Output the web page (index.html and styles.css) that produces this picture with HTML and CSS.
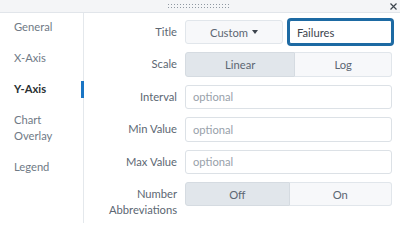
FILE: index.html
```html
<!DOCTYPE html>
<html>
<head>
<meta charset="utf-8">
<link rel="stylesheet" href="styles.css">
</head>
<body>
<div class="dialog">
  <div class="titlebar">
    <span></span>
    <div class="grip"></div>
    <button class="close" aria-label="Close">
      <svg width="7" height="7" viewBox="0 0 7 7"><path d="M0.5 0.5L6.5 6.5M6.5 0.5L0.5 6.5" stroke="#3c444d" stroke-width="1.2" fill="none"/></svg>
    </button>
  </div>
  <div class="body">
    <nav class="nav">
      <div class="nav-item">General</div>
      <div class="nav-item">X-Axis</div>
      <div class="nav-item active">Y-Axis</div>
      <div class="nav-item">Chart<br>Overlay</div>
      <div class="nav-item">Legend</div>
    </nav>
    <div class="form">
      <div class="label">Title</div>
      <div class="control split">
        <button class="btn">Custom <span class="caret"></span></button>
        <div class="input focus">Failures</div>
      </div>

      <div class="label">Scale</div>
      <div class="control group">
        <button class="seg selected">Linear</button>
        <button class="seg">Log</button>
      </div>

      <div class="label">Interval</div>
      <div class="control"><div class="input placeholder">optional</div></div>

      <div class="label">Min Value</div>
      <div class="control"><div class="input placeholder">optional</div></div>

      <div class="label">Max Value</div>
      <div class="control"><div class="input placeholder">optional</div></div>

      <div class="label">Number<br>Abbreviations</div>
      <div class="control group">
        <button class="seg selected">Off</button>
        <button class="seg">On</button>
      </div>
    </div>
  </div>
</div>
</body>
</html>
```
FILE: styles.css
```css
* { box-sizing: border-box; }
html, body { margin: 0; padding: 0; background: #ffffff; }
body {
  font-family: "Lato", "Liberation Sans", sans-serif;
  font-size: 11.2px;
  color: #5c6773;
  width: 400px;
  height: 223px;
  overflow: hidden;
}
.dialog { width: 400px; height: 223px; display: flex; flex-direction: column; }
.titlebar {
  height: 13px;
  flex: none;
  background: #f4f5f7;
  border-bottom: 1px solid #e1e5ea;
  display: grid;
  grid-template-columns: 1fr auto 1fr;
  align-items: center;
}
.grip {
  width: 62px;
  height: 6px;
  margin-top: -1px;
  margin-left: -4px;
  background-image: radial-gradient(circle, #8f98a2 0.75px, transparent 1px);
  background-size: 3px 3px;
  background-position: 0 0;
}
.close {
  justify-self: end;
  border: 0;
  background: none;
  padding: 0;
  margin-right: 2px;
  width: 9px;
  height: 9px;
  display: flex;
  align-items: center;
  justify-content: center;
}
.body { flex: 1; display: flex; }
.nav {
  width: 84px;
  flex: none;
  border-right: 1px solid #e4e8ec;
  padding-top: 0;
}
.nav-item {
  position: relative;
  padding: 6px 0 9px 14px;
  line-height: 16px;
  color: #6f7a86;
}
.nav-item.active { color: #2b3033; font-weight: bold; }
.nav-item.active::after {
  content: "";
  position: absolute;
  right: -1px;
  top: 6px;
  width: 3px;
  height: 17px;
  background: #1a75c4;
}
.form {
  flex: 1;
  display: grid;
  grid-template-columns: 93px 1fr;
  column-gap: 8px;
  row-gap: 8px;
  padding: 7px 8px 0 0;
  align-content: start;
  grid-auto-rows: 24.4px;
}
.label {
  text-align: right;
  line-height: 16px;
  padding-top: 4px;
  color: #5c6773;
  white-space: nowrap;
}
.control { display: flex; height: 100%; }
.split { gap: 6px; }
.btn {
  width: 98px;
  flex: none;
  font: inherit;
  color: #5c6773;
  background: #f7f8fa;
  border: 1px solid #e1e6eb;
  border-radius: 3px;
  padding: 0;
  display: flex;
  align-items: center;
  justify-content: center;
  gap: 4px;
}
.caret {
  width: 0; height: 0;
  border-left: 3.5px solid transparent;
  border-right: 3.5px solid transparent;
  border-top: 4px solid #3c444d;
  margin-top: -1px;
}
.input {
  flex: 1;
  border: 1px solid #dce1e6;
  border-radius: 3px;
  background: #fff;
  padding: 0 7px;
  display: flex;
  align-items: center;
  color: #3c444d;
}
.input.placeholder { color: #98a1aa; }
.input.focus {
  border-color: #1d6aa3;
  box-shadow: 0 0 0 2px #1d6aa3;
  border-radius: 2px;
}
.group { border-radius: 3px; }
.seg {
  flex: 1 1 auto;
  font: inherit;
  color: #5c6773;
  background: #f7f8fa;
  border: 1px solid #e1e6eb;
  padding: 0 6px;
}
.seg:first-child { border-radius: 3px 0 0 3px; }
.seg:last-child { border-radius: 0 3px 3px 0; border-left: 0; }
.seg.selected { background: #e1e6eb; border-color: #d5dbe1; }
```
